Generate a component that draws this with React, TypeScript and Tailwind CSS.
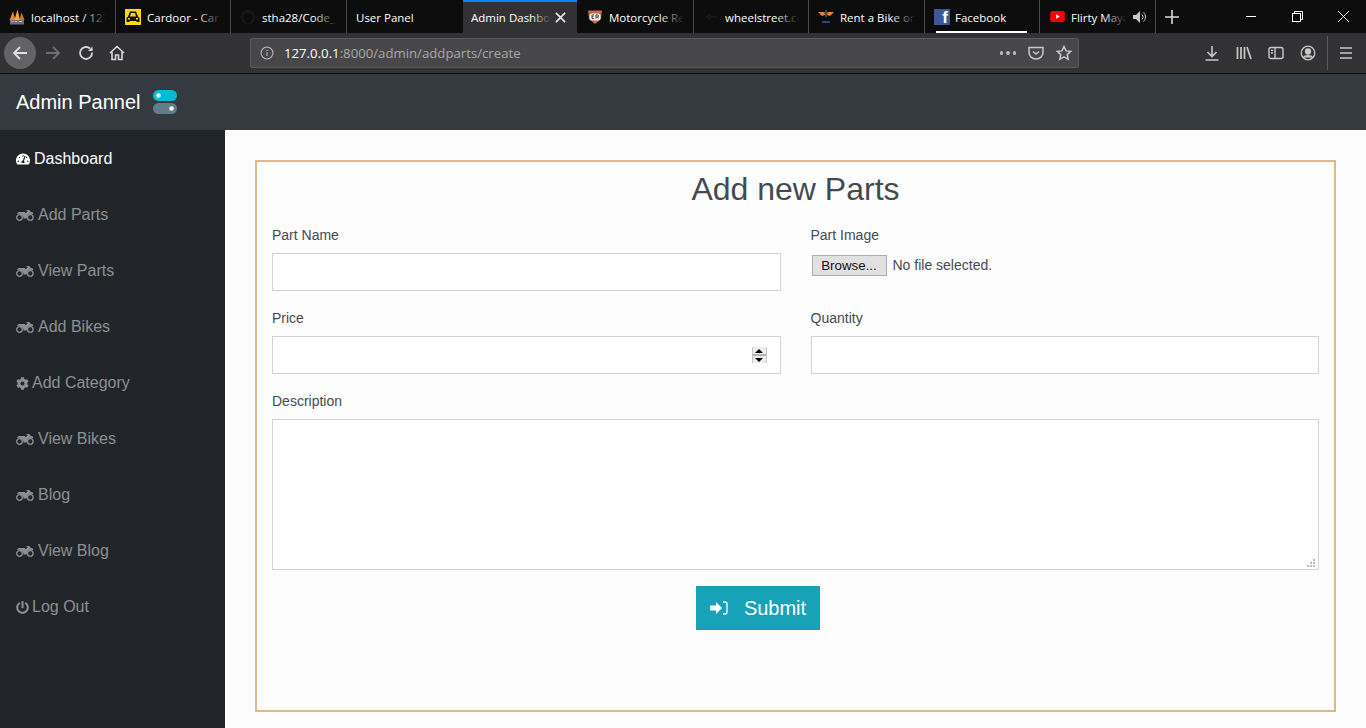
import { FaTachometerAlt, FaCog, FaPowerOff } from 'react-icons/fa';
import { ReactNode } from 'react';

const tabs: { title: string; width: string; icon: ReactNode }[] = [
  {
    title: 'localhost / 127.0.0.1',
    width: 'w-[116px]',
    icon: (
      <svg viewBox="0 0 16 16" className="w-4 h-4 shrink-0">
        <path d="M0.500 11 4 2.500 6.500 11z" fill="#e8872b" />
        <path d="M5.500 11 8.500 0.500 11 11z" fill="#f5a83a" />
        <path d="M10.500 11 12.500 3.500 15.500 11z" fill="#d9731f" />
        <rect x="1" y="11" width="14" height="4.500" fill="#6f6f88" />
        <path d="M2.500 12.500h2M6 12.500h2M10 12.500h3" stroke="#c4c4d4" />
      </svg>
    ),
  },
  {
    title: 'Cardoor - Car Rental',
    width: 'w-[115px]',
    icon: (
      <svg viewBox="0 0 16 16" className="w-4 h-4 shrink-0">
        <rect width="16" height="16" fill="#ffd814" />
        <path d="M1.500 9 3 7.500 5 2.500h6l2 5L14.500 9v4h-3v-1h-7v1h-3z" fill="#111" />
        <path d="M6 4h4l1 3.500H5z" fill="#ffd814" />
        <rect x="3" y="9" width="2" height="1.500" fill="#ffd814" />
        <rect x="11" y="9" width="2" height="1.500" fill="#ffd814" />
      </svg>
    ),
  },
  {
    title: 'stha28/Code_Test',
    width: 'w-[116px]',
    icon: (
      <svg viewBox="0 0 16 16" className="w-4 h-4 shrink-0">
        <circle cx="8" cy="8" r="7.500" fill="#161616" />
        <path d="M5 14v-3C3 9 3.500 5.500 4.500 4.500h7C12.500 5.500 13 9 11 11v3z" fill="#0c0c0d" />
      </svg>
    ),
  },
  { title: 'User Panel', width: 'w-[117px]', icon: null },
];

const tabsAfter: { title: string; width: string; icon: ReactNode }[] = [
  {
    title: 'Motorcycle Rental',
    width: 'w-[116px]',
    icon: (
      <svg viewBox="0 0 16 16" className="w-4 h-4 shrink-0">
        <path d="M1 1.500h14l-1 8.500L8 15l-6-5z" fill="#c8693f" />
        <rect x="2.500" y="4.500" width="11" height="7" rx="2.500" fill="#f2f2f2" />
        <path d="M5 6v3.500M5 6h2M5 7.700h1.500M5 9.500h2M9 9.500V6h1.500a1 1 0 0 1 0 2H9M10.500 8l1 1.500" stroke="#333" strokeWidth="0.900" fill="none" />
      </svg>
    ),
  },
  {
    title: 'wheelstreet.com',
    width: 'w-[115px]',
    icon: (
      <svg viewBox="0 0 16 16" className="w-4 h-4 shrink-0">
        <path d="M2 8l6-4v3h6v2H8v3z" fill="#161616" />
      </svg>
    ),
  },
  {
    title: 'Rent a Bike online',
    width: 'w-[116px]',
    icon: (
      <svg viewBox="0 0 16 16" className="w-4 h-4 shrink-0">
        <path d="M0 3h6.500l.5 3-3 1z" fill="#e8832a" />
        <path d="M16 3H9.500L9 6l3 1z" fill="#e8832a" />
        <rect x="7" y="1" width="2" height="7" fill="#2a4a7a" />
        <rect x="4" y="12" width="8" height="2" fill="#2a4a7a" />
      </svg>
    ),
  },
];

const menu = [
  { label: 'Dashboard', icon: 'dash', active: true },
  { label: 'Add Parts', icon: 'bike' },
  { label: 'View Parts', icon: 'bike' },
  { label: 'Add Bikes', icon: 'bike' },
  { label: 'Add Category', icon: 'cog' },
  { label: 'View Bikes', icon: 'bike' },
  { label: 'Blog', icon: 'bike' },
  { label: 'View Blog', icon: 'bike' },
  { label: 'Log Out', icon: 'power' },
];

function TabTitle({ title }: { title: string }) {
  return (
    <div className="relative flex-1 min-w-0 pt-[2px] overflow-hidden whitespace-nowrap text-white">
      {title}
      <div className="absolute inset-y-0 right-0 w-6 bg-gradient-to-r from-transparent to-[#0c0c0d]" />
    </div>
  );
}

function Tab({ title, width, icon }: { title: string; width: string; icon: ReactNode }) {
  return (
    <div className={`${width} h-[33px] flex items-center gap-[6px] pl-[9px] pr-[9px] border-r border-[#4a4a4d] shrink-0`}>
      {icon}
      <TabTitle title={title} />
    </div>
  );
}

function Bike() {
  return (
    <svg viewBox="0 0 18 11" className="w-[18px] h-[11px] mr-1" fill="none" stroke="currentColor">
      <circle cx="3.500" cy="7.500" r="2.800" strokeWidth="1.300" />
      <circle cx="14.300" cy="7.500" r="2.800" strokeWidth="1.300" />
      <path d="M1 3.200 2.500 2h6l1.500 1 2-1.800h-1.500V0h3l1 1.700 2.500.8v1.500h-4l-2.500 4.500H7.500c0-2.800-2.500-5-6.500-4.800z" fill="currentColor" stroke="none" />
    </svg>
  );
}

function MenuIcon({ name }: { name: string }) {
  if (name === 'dash') return <FaTachometerAlt className="w-[14px] h-[14px] mr-1" />;
  if (name === 'cog') return <FaCog className="w-[13px] h-[13px] mr-[3px]" />;
  if (name === 'power') return <FaPowerOff className="w-[13px] h-[13px] mr-[3px]" />;
  return <Bike />;
}

function Field({ label, children }: { label: string; children: ReactNode }) {
  return (
    <div>
      <label className="block text-sm leading-[23px] mb-[6px] text-[#444a50]">{label}</label>
      {children}
    </div>
  );
}

const inputClass = 'block w-full h-[38px] bg-white border border-[#ced4da] outline-none';

export default function App() {
  return (
    <div className="w-[1366px] h-[728px] overflow-hidden flex flex-col bg-[#fdfdfd] font-['Liberation_Sans',Arial,sans-serif]">
      {/* browser tabs */}
      <div className="h-[33px] flex bg-[#0c0c0d] text-[11.500px] font-['Open_Sans',sans-serif] shrink-0">
        {tabs.map((t) => (
          <Tab key={t.title} {...t} />
        ))}
        <div className="w-[114px] h-[33px] flex items-center gap-1 pl-2 pr-[11px] bg-[#323234] border-t-2 border-[#0a84ff] text-white shrink-0 -ml-px">
          <div className="relative flex-1 min-w-0 overflow-hidden whitespace-nowrap">
            Admin Dashboard
            <div className="absolute inset-y-0 right-0 w-5 bg-gradient-to-r from-transparent to-[#323234]" />
          </div>
          <svg viewBox="0 0 12 12" className="w-[11px] h-[11px] shrink-0" stroke="#e8e8e8" strokeWidth="1.800">
            <path d="M1 1l10 10M11 1 1 11" />
          </svg>
        </div>
        <div className="w-px" />
        {tabsAfter.map((t) => (
          <Tab key={t.title} {...t} />
        ))}
        <div className="relative w-[115px] h-[33px] flex items-center gap-[5px] pl-[9px] pr-2 border-r border-[#4a4a4d] shrink-0">
          <div className="w-4 h-4 bg-[#3b5998] flex items-end justify-end pr-[2px] overflow-hidden text-white text-[17px] font-bold leading-[14px] font-['Liberation_Sans',sans-serif]">f</div>
          <div className="text-white whitespace-nowrap pt-[2px]">Facebook</div>
          <div className="absolute left-[11px] bottom-0 w-[91px] h-[2px] bg-white" />
        </div>
        <div className="w-[116px] h-[33px] flex items-center gap-[6px] pl-[10px] pr-[8px] border-r border-[#4a4a4d] shrink-0">
          <svg viewBox="0 0 16 12" className="w-[15px] h-[11px] shrink-0">
            <rect width="16" height="12" rx="3" fill="#f00" />
            <path d="M6.500 3.500v5l4-2.500z" fill="#fff" />
          </svg>
          <TabTitle title="Flirty Maya" />
          <svg viewBox="0 0 14 12" className="w-[14px] h-3 shrink-0" fill="#c8c8c8">
            <path d="M0 4h3l4-4v12L3 8H0z" />
            <path d="M9 3.500a3.500 3.500 0 0 1 0 5M10.500 1.500a6 6 0 0 1 0 9" stroke="#c8c8c8" fill="none" />
          </svg>
        </div>
        <div className="flex-1 flex items-center justify-between">
          <svg viewBox="0 0 14 14" className="w-[14px] h-[14px] ml-[9px]" stroke="#d8d8d8" strokeWidth="1.600">
            <path d="M7 0v14M0 7h14" />
          </svg>
          <div className="flex items-center">
            <div className="w-[46px] flex justify-center">
              <div className="w-[10px] h-px bg-white" />
            </div>
            <div className="w-[46px] flex justify-center">
              <svg viewBox="0 0 11 11" className="w-[11px] h-[11px]" fill="none" stroke="#fff">
                <rect x="0.500" y="2.500" width="8" height="8" />
                <path d="M2.500 2.500v-2h8v8h-2" />
              </svg>
            </div>
            <div className="w-[46px] flex justify-center">
              <svg viewBox="0 0 11 11" className="w-[11px] h-[11px]" stroke="#fff">
                <path d="M0 0l11 11M11 0 0 11" />
              </svg>
            </div>
          </div>
        </div>
      </div>

      {/* browser toolbar */}
      <div className="h-[41px] flex items-center bg-[#323234] border-b border-[#0c0c0d] shrink-0 relative">
        <div className="w-[32px] h-[32px] ml-1 rounded-full bg-[#636365] flex items-center justify-center">
          <svg viewBox="0 0 16 16" className="w-4 h-4" fill="none" stroke="#e0e0e0" strokeWidth="1.800">
            <path d="M15 8H2M8 2 2 8l6 6" />
          </svg>
        </div>
        <svg viewBox="0 0 16 16" className="w-4 h-4 ml-[9px]" fill="none" stroke="#6e6e70" strokeWidth="1.800">
          <path d="M1 8h13M8 2l6 6-6 6" />
        </svg>
        <svg viewBox="0 0 16 16" className="w-4 h-4 ml-[17px]" fill="none" stroke="#d8d8d8" strokeWidth="1.800">
          <path d="M14 7.500A6 6 0 1 1 12 3.500" />
          <path d="M14.500 1.500v4.500H10" fill="#d8d8d8" stroke="none" />
        </svg>
        <svg viewBox="0 0 16 16" className="w-4 h-4 ml-[15px]" fill="none" stroke="#d8d8d8" strokeWidth="1.600">
          <path d="M1 8l7-6.500L15 8M3 7v7.500h3.500V10h3v4.500H13V7" />
        </svg>
        <div className="ml-[125px] w-[829px] h-[30px] flex items-center bg-[#474749] border border-[#5a5a5c] rounded-[2px] font-['Open_Sans',sans-serif] text-[13.200px]">
          <svg viewBox="0 0 16 16" className="w-[14px] h-[14px] ml-[9px]" fill="none" stroke="#bcbcbc" strokeWidth="1.200">
            <circle cx="8" cy="8" r="6.800" />
            <path d="M8 7v4.500M8 4.200v1.400" />
          </svg>
          <div className="ml-[10px] pt-[2px] whitespace-nowrap text-[#a8a8aa]">
            <span className="text-white">127.0.0.1</span>:8000/admin/addparts/create
          </div>
          <div className="ml-auto flex items-center gap-[3px] mr-[1px]">
            <span className="w-[3.500px] h-[3.500px] rounded-full bg-[#bcbcbc]" />
            <span className="w-[3.500px] h-[3.500px] rounded-full bg-[#bcbcbc]" />
            <span className="w-[3.500px] h-[3.500px] rounded-full bg-[#bcbcbc]" />
          </div>
          <svg viewBox="0 0 16 16" className="w-4 h-4 ml-[11px]" fill="none" stroke="#c8c8c8" strokeWidth="1.500">
            <path d="M1 2.500h14v5a7 6.500 0 0 1-14 0z" />
            <path d="M5 6.500l3 2.500 3-2.500" />
          </svg>
          <svg viewBox="0 0 16 16" className="w-4 h-4 ml-[12px] mr-[6px]" fill="none" stroke="#c8c8c8" strokeWidth="1.500">
            <path d="M8 1.500l2 4.400 4.800.5-3.600 3.200 1 4.700L8 11.900l-4.200 2.400 1-4.700L1.200 6.400 6 5.900z" />
          </svg>
        </div>
        <svg viewBox="0 0 16 16" className="w-4 h-4 ml-[125px]" fill="none" stroke="#c8c8c8" strokeWidth="1.600">
          <path d="M8 1v10M3.500 7 8 11.500 12.500 7M1.500 15h13" />
        </svg>
        <svg viewBox="0 0 16 16" className="w-4 h-4 ml-[16px]" fill="none" stroke="#c8c8c8" strokeWidth="1.700">
          <path d="M1.500 2v12M5 2v12M8.500 2v12M11 2l4 12" />
        </svg>
        <svg viewBox="0 0 16 16" className="w-4 h-4 ml-[16px]" fill="none" stroke="#c8c8c8" strokeWidth="1.400">
          <rect x="1" y="2.500" width="14" height="11" rx="2" />
          <path d="M7 2.500v11M3 5.500h2M3 8h2" />
        </svg>
        <svg viewBox="0 0 16 16" className="w-4 h-4 ml-[16px]" fill="none" stroke="#c8c8c8" strokeWidth="1.300">
          <circle cx="8" cy="8" r="6.800" />
          <circle cx="8" cy="6.500" r="2.500" fill="#c8c8c8" />
          <path d="M3.500 12.500c1-2.500 8-2.500 9 0" fill="#c8c8c8" />
        </svg>
        <div className="w-px h-[34px] bg-[#5a5a5c] ml-[11px]" />
        <svg viewBox="0 0 16 16" className="w-4 h-4 ml-[10px]" stroke="#c8c8c8" strokeWidth="1.700">
          <path d="M2 3h12M2 8h12M2 13h12" />
        </svg>
      </div>

      {/* site navbar */}
      <div className="h-[56px] flex items-center bg-[#343a40] px-4 shrink-0">
        <span className="text-xl text-white">Admin Pannel</span>
        <svg viewBox="0 0 24 24" className="w-6 h-6 ml-3">
          <rect x="0" y="0" width="24" height="11" rx="5.500" fill="#00bcd4" />
          <circle cx="5.500" cy="5.500" r="2.300" fill="#fff" />
          <rect x="0" y="13" width="24" height="11" rx="5.500" fill="#607d8b" />
          <circle cx="18.500" cy="18.500" r="2.300" fill="#fff" />
        </svg>
      </div>

      <div className="flex-1 flex min-h-0">
        {/* sidebar */}
        <div className="w-[225px] bg-[#212529] shrink-0">
          {menu.map((m) => (
            <div
              key={m.label}
              className={`h-[56px] flex items-center pl-4 pt-[2px] ${m.active ? 'text-white' : 'text-[#8e9092]'}`}
            >
              <MenuIcon name={m.icon} />
              <span>{m.label}</span>
            </div>
          ))}
        </div>

        {/* content */}
        <div className="flex-1 pt-[30px] pl-[30px] pr-[30px]">
          <div className="h-[552px] border-2 border-[#deb887] px-[15px] pt-2">
            <h2 className="text-[32px] leading-[38px] text-center text-[#444a50] mb-4">Add new Parts</h2>
            <div className="grid grid-cols-2 gap-x-[30px] gap-y-4">
              <Field label="Part Name">
                <input type="text" className={inputClass} />
              </Field>
              <Field label="Part Image">
                <div className="flex items-center h-[24px] text-sm text-[#444a50]">
                  <div className="ml-px w-[75px] h-[21px] pt-px flex items-center justify-center bg-[#e1e1e1] border border-[#adadad] text-[13.330px] text-[#111]">Browse...</div>
                  <span className="ml-[6px]">No file selected.</span>
                </div>
              </Field>
              <Field label="Price">
                <div className="relative">
                  <input type="text" className={inputClass} />
                  <div className="absolute right-[14px] top-[11px] w-[15px] h-[16px] bg-[#ededed] border-x border-[#c4c4c4] flex flex-col items-center justify-between">
                    <div className="h-[7px] flex items-center justify-center">
                      <div className="w-0 h-0 border-x-[4px] border-x-transparent border-b-[4px] border-b-black" />
                    </div>
                    <div className="w-full h-[2px] bg-[#b4b4b4]" />
                    <div className="h-[7px] flex items-center justify-center">
                      <div className="w-0 h-0 border-x-[4px] border-x-transparent border-t-[4px] border-t-black" />
                    </div>
                  </div>
                </div>
              </Field>
              <Field label="Quantity">
                <input type="text" className={inputClass} />
              </Field>
              <div className="col-span-2">
                <Field label="Description">
                  <div className="relative">
                    <textarea className="block w-full h-[151px] bg-white border border-[#ced4da] outline-none resize-none" />
                    <svg viewBox="0 0 8 8" className="absolute right-[4px] bottom-[3px] w-2 h-2" fill="#bdbdbd">
                      <rect x="6" y="0" width="2" height="2" />
                      <rect x="3" y="3" width="2" height="2" />
                      <rect x="6" y="3" width="2" height="2" />
                      <rect x="0" y="6" width="2" height="2" />
                      <rect x="3" y="6" width="2" height="2" />
                      <rect x="6" y="6" width="2" height="2" />
                    </svg>
                  </div>
                </Field>
              </div>
            </div>
            <div className="flex justify-center mt-4 pr-[75px]">
              <button className="w-[124px] h-[44px] flex items-center justify-center gap-4 bg-[#17a2b8] text-white text-xl">
                <svg viewBox="0 0 18 14" className="w-[18px] h-[14px]" fill="#fff">
                  <path d="M0 4.500h6V1l6 6-6 6V9.500H0z" />
                  <path d="M13 1h2a2 2 0 0 1 2 2v8a2 2 0 0 1-2 2h-2" fill="none" stroke="#fff" strokeWidth="1.300" />
                </svg>
                Submit
              </button>
            </div>
          </div>
        </div>
      </div>
    </div>
  );
}
